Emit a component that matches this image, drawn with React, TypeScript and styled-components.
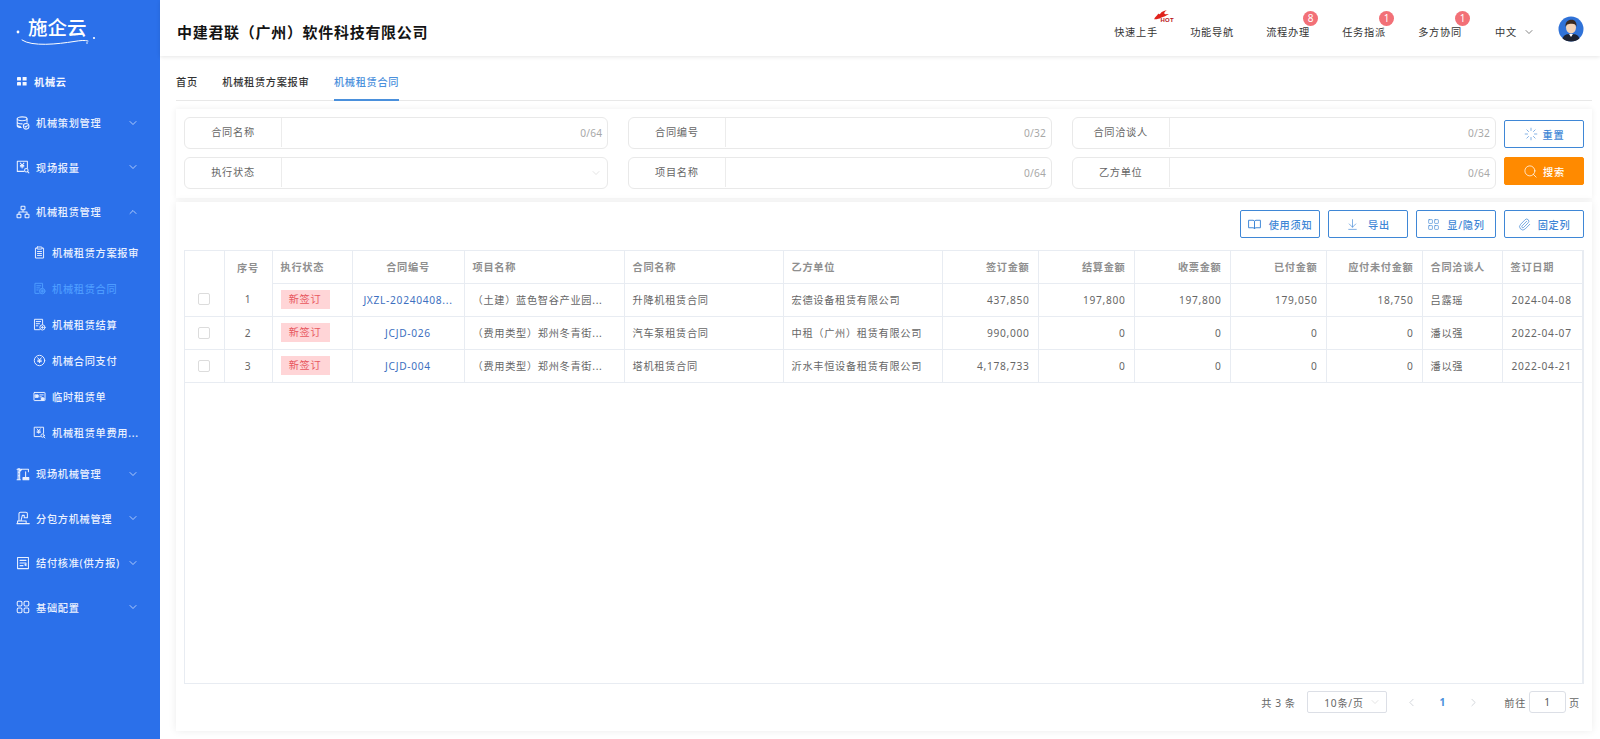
import React from 'react';
import styled, { createGlobalStyle } from 'styled-components';
import { ArrowDownToLine, ChevronDown, ChevronLeft, ChevronRight, ChevronUp, LayoutGrid, Loader, Paperclip, Search } from 'lucide-react';

const Global = createGlobalStyle`
  html, body { margin: 0; padding: 0; height: 739px; overflow: hidden; background: #fff; }
  body { font-family: "Noto Sans", "Noto Sans CJK SC", sans-serif; font-size: 10.2px; letter-spacing: 0.7px; color: #666; }
  * { box-sizing: border-box; }
`;

const Page = styled.div`display: flex; width: 1600px; height: 739px;`;

const Sidebar = styled.aside`
  flex: 0 0 160px; background: #2b70ea; color: #eaf1ff; display: flex; flex-direction: column;
`;
const Logo = styled.div`
  position: relative; height: 62px; padding: 15px 0 0 28px; color: #fff;
  font-size: 19.5px; line-height: 26px; font-weight: 500; letter-spacing: 0;
`;
const LogoMark = styled.svg`position: absolute; left: 0; top: 0;`;
const HomeRow = styled.div`
  height: 38.5px; display: flex; align-items: center; gap: 7px; padding-left: 17px; font-weight: 700; color: #f4f7ff;
`;
const GroupRow = styled.div`
  height: 44.5px; display: flex; align-items: center; gap: 6px; padding: 0 21px 0 16px; white-space: nowrap; font-weight: 500;
`;
const GroupLabel = styled.span`flex: 1;`;
const SubList = styled.div`margin: 0 0 1.5px; display: flex; flex-direction: column;`;
const SubRow = styled.div<{ $active?: boolean }>`
  height: 36px; display: flex; align-items: center; gap: 6px; padding-left: 33px; white-space: nowrap; font-weight: 500;
  color: ${p => (p.$active ? '#4d9cff' : '#eaf1ff')};
`;
const IconBox = styled.svg`flex: 0 0 auto; display: block;`;

const Main = styled.main`flex: 1; min-width: 0; display: flex; flex-direction: column;`;
const Header = styled.header`
  height: 56px; display: flex; align-items: center; padding: 8px 16px 0 17px; background: #fff;
  box-shadow: 0 1px 4px rgba(0, 0, 0, 0.1); position: relative; z-index: 2;
`;
const Title = styled.h1`
  flex: 1; margin: 0; font-size: 15px; letter-spacing: 0.7px; font-weight: 700; color: #141414; line-height: 22px;
`;
const Nav = styled.nav`display: flex; align-items: center;`;
const NavItem = styled.div`
  position: relative; width: 76px; text-align: center; color: #333; line-height: 16px; white-space: nowrap;
`;
const Badge = styled.span`
  position: absolute; top: -13px; left: 53px; width: 15px; height: 15px; border-radius: 50%;
  background: #f27077; color: #fff; font-size: 10px; letter-spacing: 0; line-height: 15px; text-align: center;
`;
const Hot = styled.span`
  position: absolute; top: -15px; left: 55px; width: 21px; height: 14px; display: block;
`;
const HotFlame = styled.svg`position: absolute; left: 0; top: 0;`;
const HotText = styled.span`
  position: absolute; right: 0; bottom: 0; font-family: "Liberation Sans", sans-serif; font-size: 6px; line-height: 6px;
  font-weight: 700; color: #b81416; letter-spacing: 0.3px;
`;
const Lang = styled.div`
  display: flex; align-items: center; gap: 6px; color: #333; margin: -1px 0 0 17px; width: 63px;
`;
const Avatar = styled.svg`display: block; margin-top: -6px;`;

const Tabs = styled.div`
  margin: 4px 8px 0 16px; height: 41px; display: flex; gap: 24.5px; border-bottom: 1px solid #e8e8e8;
`;
const Tab = styled.div<{ $active?: boolean }>`
  height: 41px; line-height: 44px; padding: 0; font-weight: 500; margin-bottom: -1px;
  color: ${p => (p.$active ? '#4a90dc' : '#333')};
  border-bottom: ${p => (p.$active ? '2px solid #4a90dc' : 'none')};
`;

const Content = styled.div`flex: 1; min-height: 0; padding: 8px 8px 8px 16px; display: flex; flex-direction: column;`;
const FilterCard = styled.section`
  height: 89px; flex: 0 0 auto; padding: 8px; display: flex; gap: 8px; background: #fff;
  box-shadow: 0 0 6px rgba(0, 0, 0, 0.07); position: relative;
`;
const FieldGrid = styled.div`
  flex: 0 0 1312px; display: grid; grid-template-columns: repeat(3, 1fr); column-gap: 19.5px; row-gap: 8px; align-content: start;
`;
const Field = styled.div`
  height: 32px; display: flex; border: 1px solid #e9e9e9; border-radius: 6px; background: #fff;
`;
const FieldLabel = styled.div`
  flex: 0 0 97px; height: 29px; line-height: 29px; text-align: center; color: #666; border-right: 1px solid #ececec;
`;
const FieldValue = styled.div`
  flex: 1; display: flex; align-items: center; justify-content: flex-end; padding-right: 5px; color: #a8a8a8; letter-spacing: 0.2px;
`;
const ButtonCol = styled.div`display: flex; flex-direction: column; gap: 9px; padding-top: 3px;`;
const Btn = styled.button<{ $primary?: boolean; $gap?: number }>`
  width: 80px; height: 28px; padding: 0; display: flex; align-items: center; justify-content: center;
  gap: ${p => p.$gap ?? 7}px; border-radius: 2px; font: 500 10.2px "Noto Sans", "Noto Sans CJK SC", sans-serif; letter-spacing: 0.7px;
  border: 1px solid ${p => (p.$primary ? '#ff8a00' : '#3f87d6')};
  background: ${p => (p.$primary ? '#ff8a00' : '#fff')};
  color: ${p => (p.$primary ? '#fff' : '#3f87d6')};
`;
const TableCard = styled.section`
  flex: 1; min-height: 0; margin-top: 4px; padding: 8px 8px 0; display: flex; flex-direction: column; background: #fff;
  box-shadow: 0 0 8px rgba(0, 0, 0, 0.08); position: relative;
`;
const Toolbar = styled.div`display: flex; justify-content: flex-end; gap: 8px; height: 28px; margin-bottom: 12px;`;
const TableBox = styled.div`height: 434px; border: 1px solid #e8ecf2; border-right-width: 2px;`;
const Table = styled.table`
  table-layout: fixed; width: 1397px; border-collapse: collapse;
`;
const Th = styled.th<{ $align?: string; $noLine?: boolean }>`
  height: 32px; padding: 0 8px; font-weight: 700; font-size: 10.2px; color: #8f8f8f; white-space: nowrap;
  text-align: ${p => p.$align ?? 'left'};
  border-right: 1px solid #e8ecf2;
  border-bottom: ${p => (p.$noLine ? 'none' : '1px solid #e8ecf2')};
`;
const Td = styled.td<{ $align?: string }>`
  height: 33px; padding: 0 8px; color: #666; white-space: nowrap; overflow: hidden;
  text-align: ${p => p.$align ?? 'left'};
  border-right: 1px solid #e8ecf2; border-bottom: 1px solid #e8ecf2;
`;
const DateText = styled.span`margin-left: 1px;`;
const ContractLink = styled.span`color: #3d6fc0;`;
const Tag = styled.span`
  display: block; width: 49px; height: 19px; line-height: 19px; text-align: center; background: #ffd5d7; color: #e8585f;
`;
const Check = styled.span`
  display: block; width: 12px; height: 12px; margin: 0 auto 0 5px; border: 1px solid #dcdcdc; border-radius: 2px; background: #fff;
`;
const Pager = styled.div`
  height: 36px; display: flex; align-items: center; justify-content: flex-end; padding-right: 4px; color: #666;
`;
const Total = styled.span`margin-right: 12px; letter-spacing: 0.5px;`;
const SizeSelect = styled.div`
  width: 80px; height: 22px; margin-right: 9px; border: 1px solid #dcdfe6; border-radius: 2px; display: flex; align-items: center;
  justify-content: space-between; padding: 0 5px 0 16px; color: #666;
`;
const PageArrow = styled.span`display: flex; width: 31px; justify-content: center; color: #c0c4cc;`;
const PageNum = styled.span`width: 31px; text-align: center; color: #4a90dc; font-weight: 700;`;
const JumpText = styled.span`margin-left: 15px;`;
const JumpInput = styled.div`
  width: 37px; height: 22px; margin: 0 3px; line-height: 20px; text-align: center; border: 1px solid #dcdfe6; border-radius: 3px; color: #555;
`;

type IP = { size?: number; children: React.ReactNode };
const Ico = ({ size = 14, children }: IP) => (
  <IconBox width={size} height={size} viewBox="0 0 16 16" fill="none" stroke="currentColor" strokeWidth="1.2" strokeLinecap="round" strokeLinejoin="round">
    {children}
  </IconBox>
);

const YenMark = ({ cx, cy, s = 1 }: { cx: number; cy: number; s?: number }) => (
  <path d={`M${cx - 2 * s} ${cy - 2.5 * s}L${cx} ${cy}L${cx + 2 * s} ${cy - 2.5 * s}M${cx} ${cy}V${cy + 3 * s}M${cx - 2 * s} ${cy + 0.3 * s}H${cx + 2 * s}M${cx - 2 * s} ${cy + 1.8 * s}H${cx + 2 * s}`} />
);

const icons: Record<string, React.ReactNode> = {
  db: (<><ellipse cx="7" cy="3.2" rx="5.6" ry="2.2" /><path d="M1.4 3.2V11c0 1.1 2 2 4.6 2.1M12.6 3.2V7M1.4 6.8c0 1.2 2.5 2.2 5.6 2.2M1.4 10c0 1 1.6 1.8 3.8 2" /><circle cx="11.6" cy="11.8" r="3.2" /><path d="M10.2 11.8l1 1 1.7-1.8" /></>),
  money: (<><path d="M9 13H1.5V1.5H13V9" /><YenMark cx={7} cy={6} /><circle cx="11.8" cy="11.8" r="2" /><path d="M13.3 13.3l1.4 1.4" /></>),
  org: (<><rect x="5.8" y="1.4" width="4.4" height="4" rx="0.6" /><rect x="1.2" y="10.6" width="4.4" height="4" rx="0.6" /><rect x="10.4" y="10.6" width="4.4" height="4" rx="0.6" /><path d="M8 5.400V8M3.400 10.600V8h9.200v2.600" /></>),
  clip: (<><path d="M5 2.600H3v12.200h10V2.600h-2" /><rect x="5" y="1.200" width="6" height="2.600" rx="0.5" /><path d="M5.500 6.800h5M5.500 9.200h5M5.500 11.600h5" /></>),
  docCoin: (<><path d="M7.500 14H2.400V1.600h9.400V7" /><path d="M4.600 4.600h5M4.600 7.200h3.400M4.600 9.800h1.800" /><circle cx="11.400" cy="11.200" r="3.400" fill="currentColor" fillOpacity="0.35" /><path d="M10 11.200h2.800M11.400 9.800v2.800" /></>),
  docYen: (<><path d="M8 14.400H1.800V1.600h10V8" /><path d="M4 4.400h5.400M4 7h4M4 9.600h2" /><circle cx="11.600" cy="11.600" r="3.200" /><path d="M10.400 11.600h2.400M11.600 10.400v2.400" /></>),
  yenCircle: (<><circle cx="8" cy="8" r="6.400" /><YenMark cx={8} cy={7.4} s={1.1} /></>),
  card: (<><rect x="1.200" y="3" width="13.600" height="10" rx="0.6" /><rect x="3" y="6" width="3.400" height="3" fill="currentColor" /><path d="M8.400 6h4.200M8.400 8.400h2" /><circle cx="11.800" cy="11" r="1.800" fill="currentColor" /></>),
  crane: (<><path d="M2.400 14.600V2h1.800v12.600M1.200 14.600h3.800M1.200 2.600h13V5.500M4.200 5.200L6.600 2.600M2.400 6h1.800M2.400 10h1.800M11 5.500v6.500" /><rect x="8" y="12" width="6.600" height="2.600" fill="currentColor" /></>),
  machine: (<><path d="M3.400 11.500V3.200c0-1 .8-1.800 1.800-1.800h6c1 0 1.800.8 1.800 1.800v4.400h-3.600V5H7.200l-1.600 6.500M1 14.400h14.200M1.800 14.400v-3h9.800v3" /></>),
  note: (<><rect x="1.800" y="1.600" width="12.400" height="12.800" /><path d="M4.600 5h6.800M4.600 8h6.800v3l-1.400-1M4.600 11h3.400" /></>),
  grid: (<><rect x="1.400" y="1.400" width="5.400" height="5.400" rx="1.400" /><rect x="9.200" y="1.400" width="5.400" height="5.400" rx="1.400" /><rect x="1.400" y="9.200" width="5.400" height="5.400" rx="1.400" /><rect x="9.200" y="9.200" width="5.400" height="5.400" rx="1.400" /></>),
  book: (<><path d="M1.200 2.800h5c1 0 1.800.6 1.800 1.600v9c0-.9-.8-1.400-1.800-1.400h-5zM14.800 2.800h-5C8.800 2.800 8 3.400 8 4.400v9c0-.9.800-1.400 1.800-1.400h5z" /></>),
};

const subItems = [
  { icon: 'clip', label: '机械租赁方案报审' },
  { icon: 'docCoin', label: '机械租赁合同', active: true },
  { icon: 'docYen', label: '机械租赁结算' },
  { icon: 'yenCircle', label: '机械合同支付' },
  { icon: 'card', label: '临时租赁单' },
  { icon: 'money', label: '机械租赁单费用...' },
];

const Group = ({ icon, label, open }: { icon: string; label: string; open?: boolean }) => (
  <GroupRow>
    <Ico>{icons[icon]}</Ico>
    <GroupLabel>{label}</GroupLabel>
    {open ? <ChevronUp size={12} strokeWidth={1.4} /> : <ChevronDown size={12} strokeWidth={1.4} />}
  </GroupRow>
);

const columns: { key: string; w: number; align?: string }[] = [
  { key: '', w: 39 },
  { key: '序号', w: 48, align: 'center' },
  { key: '执行状态', w: 80 },
  { key: '合同编号', w: 112, align: 'center' },
  { key: '项目名称', w: 160 },
  { key: '合同名称', w: 159 },
  { key: '乙方单位', w: 159 },
  { key: '签订金额', w: 96, align: 'right' },
  { key: '结算金额', w: 96, align: 'right' },
  { key: '收票金额', w: 96, align: 'right' },
  { key: '已付金额', w: 96, align: 'right' },
  { key: '应付未付金额', w: 96, align: 'right' },
  { key: '合同洽谈人', w: 80 },
  { key: '签订日期', w: 80 },
];

const rows = [
  ['1', 'JXZL-20240408...', '（土建）蓝色智谷产业园...', '升降机租赁合同', '宏德设备租赁有限公司', '437,850', '197,800', '197,800', '179,050', '18,750', '吕露瑶', '2024-04-08'],
  ['2', 'JCJD-026', '（费用类型）郑州冬青街...', '汽车泵租赁合同', '中租（广州）租赁有限公司', '990,000', '0', '0', '0', '0', '潘以强', '2022-04-07'],
  ['3', 'JCJD-004', '（费用类型）郑州冬青街...', '塔机租赁合同', '沂水丰恒设备租赁有限公司', '4,178,733', '0', '0', '0', '0', '潘以强', '2022-04-21'],
];

const filters = [
  { label: '合同名称', count: '0/64' },
  { label: '合同编号', count: '0/32' },
  { label: '合同洽谈人', count: '0/32' },
  { label: '执行状态' },
  { label: '项目名称', count: '0/64' },
  { label: '乙方单位', count: '0/64' },
];

export default function App() {
  return (
    <Page>
      <Global />
      <Sidebar>
        <Logo>
          施企云
          <LogoMark width="100" height="50" viewBox="0 0 100 50" fill="none">
            <circle cx="18" cy="32" r="1.4" fill="#fff" />
            <circle cx="94" cy="38" r="1.1" fill="#fff" />
            <circle cx="87" cy="43" r="0.8" fill="#fff" />
            <path d="M22 40C32 47 58 44 74 41.500C80 40.500 85 40 88 41" stroke="#fff" strokeWidth="1" strokeLinecap="round" />
          </LogoMark>
        </Logo>
        <HomeRow>
          <IconBox width="10" height="9" viewBox="0 0 10 9" fill="currentColor">
            <rect x="0" y="0" width="4" height="3.6" rx="0.4" />
            <rect x="5.6" y="0" width="4" height="3.6" rx="0.4" />
            <rect x="0" y="5" width="4" height="3.6" rx="0.4" />
            <rect x="5.6" y="5" width="4" height="3.6" rx="0.4" />
          </IconBox>
          机械云
        </HomeRow>
        <Group icon="db" label="机械策划管理" />
        <Group icon="money" label="现场报量" />
        <Group icon="org" label="机械租赁管理" open />
        <SubList>
          {subItems.map(s => (
            <SubRow key={s.label} $active={s.active}>
              <Ico size={13}>{icons[s.icon]}</Ico>
              {s.label}
            </SubRow>
          ))}
        </SubList>
        <Group icon="crane" label="现场机械管理" />
        <Group icon="machine" label="分包方机械管理" />
        <Group icon="note" label="结付核准(供方报)" />
        <Group icon="grid" label="基础配置" />
      </Sidebar>
      <Main>
        <Header>
          <Title>中建君联（广州）软件科技有限公司</Title>
          <Nav>
            <NavItem>
              快速上手
              <Hot>
                <HotFlame width="17" height="11" viewBox="0 0 16 10" fill="#e0231c">
                  <path d="M1 9.500C2 7 4 6 5 4C5.500 5 6 5 7 4C8 2.500 10 1.500 13 1C11 2.500 10 3.500 11 4.500C12 5 14 4.500 15 4.500C13 5.500 12 6.500 10 7C8 7.500 7 8.500 5 9C3.500 9.500 2 9.700 1 9.500Z" />
                </HotFlame>
                <HotText>HOT</HotText>
              </Hot>
            </NavItem>
            <NavItem>功能导航</NavItem>
            <NavItem>流程办理<Badge>8</Badge></NavItem>
            <NavItem>任务指派<Badge>1</Badge></NavItem>
            <NavItem>多方协同<Badge>1</Badge></NavItem>
          </Nav>
          <Lang>中文 <ChevronDown size={12} strokeWidth={1.2} /></Lang>
          <Avatar width="26" height="26" viewBox="0 0 26 26">
            <circle cx="13" cy="13" r="12.500" fill="#2f72d8" />
            <path d="M4.500 22.500C6 18.500 9 18 13 18C17 18 20 18.500 21.500 22.500C19.500 24.500 16.500 25.500 13 25.500C9.500 25.500 6.500 24.500 4.500 22.500Z" fill="#1d2333" />
            <path d="M11 18L13 21L15 18Z" fill="#fff" />
            <ellipse cx="13" cy="11.500" rx="5" ry="6" fill="#f3d3b8" />
            <path d="M7.500 11C7 6 10 3.800 13.500 3.800C17 3.800 19 6.500 18.500 11C18 8.500 16.500 7.800 14 7.800C11.500 7.800 8.500 8 7.500 11Z" fill="#3a2a22" />
          </Avatar>
        </Header>
        <Tabs>
          <Tab>首页</Tab>
          <Tab>机械租赁方案报审</Tab>
          <Tab $active>机械租赁合同</Tab>
        </Tabs>
        <Content>
          <FilterCard>
            <FieldGrid>
              {filters.map(f => (
                <Field key={f.label}>
                  <FieldLabel>{f.label}</FieldLabel>
                  <FieldValue>{f.count ?? <ChevronDown size={12} strokeWidth={1} color="#c8c8c8" />}</FieldValue>
                </Field>
              ))}
            </FieldGrid>
            <ButtonCol>
              <Btn $gap={5}><Loader size={14} strokeWidth={1.1} />重置</Btn>
              <Btn $primary $gap={5}><Search size={15} strokeWidth={1.2} />搜索</Btn>
            </ButtonCol>
          </FilterCard>
          <TableCard>
            <Toolbar>
              <Btn $gap={8}><Ico size={13}>{icons.book}</Ico>使用须知</Btn>
              <Btn $gap={9}><ArrowDownToLine size={13} strokeWidth={1.2} />导出</Btn>
              <Btn $gap={7}><LayoutGrid size={13} strokeWidth={1.2} />显/隐列</Btn>
              <Btn $gap={7}><Paperclip size={13} strokeWidth={1.3} />固定列</Btn>
            </Toolbar>
            <TableBox>
              <Table>
                <colgroup>
                  {columns.map((c, i) => <col key={i} width={c.w} />)}
                </colgroup>
                <thead>
                  <tr>
                    {columns.map((c, i) => (
                      <Th key={i} $align={c.align} $noLine={i < 2}>{c.key}</Th>
                    ))}
                  </tr>
                </thead>
                <tbody>
                  {rows.map(r => (
                    <tr key={r[0]}>
                      <Td><Check /></Td>
                      <Td $align="center">{r[0]}</Td>
                      <Td><Tag>新签订</Tag></Td>
                      <Td $align="center"><ContractLink>{r[1]}</ContractLink></Td>
                      <Td>{r[2]}</Td>
                      <Td>{r[3]}</Td>
                      <Td>{r[4]}</Td>
                      <Td $align="right">{r[5]}</Td>
                      <Td $align="right">{r[6]}</Td>
                      <Td $align="right">{r[7]}</Td>
                      <Td $align="right">{r[8]}</Td>
                      <Td $align="right">{r[9]}</Td>
                      <Td>{r[10]}</Td>
                      <Td><DateText>{r[11]}</DateText></Td>
                    </tr>
                  ))}
                </tbody>
              </Table>
            </TableBox>
            <Pager>
              <Total>共 3 条</Total>
              <SizeSelect>10条/页<ChevronDown size={12} strokeWidth={1} color="#c8c8c8" /></SizeSelect>
              <PageArrow><ChevronLeft size={13} strokeWidth={1.3} /></PageArrow>
              <PageNum>1</PageNum>
              <PageArrow><ChevronRight size={13} strokeWidth={1.3} /></PageArrow>
              <JumpText>前往</JumpText>
              <JumpInput>1</JumpInput>
              <span>页</span>
            </Pager>
          </TableCard>
        </Content>
      </Main>
    </Page>
  );
}
